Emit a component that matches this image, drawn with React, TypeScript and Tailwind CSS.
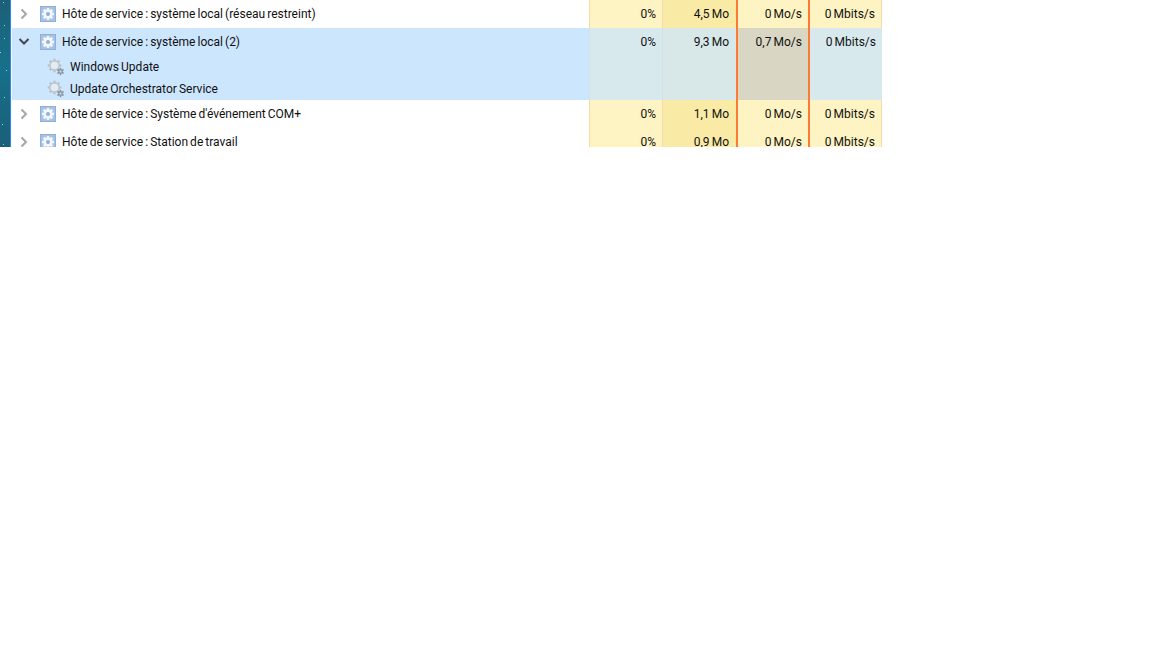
type Cell = { text?: string; bg: string; border: string };

const widths = ["w-[73px] pr-[6px]", "w-[75px] pr-[7px]", "w-[72px] pr-[6px]", "w-[72px] pr-[6px]"];

function GearBox() {
  return (
    <svg width="16" height="16" viewBox="0 0 16 16" className="shrink-0">
      <rect x="0.5" y="0.5" width="15" height="15" fill="#a6c2e6" stroke="#8fb0d8" />
      <g transform="translate(8 8)">
        {[0, 45, 90, 135].map((a) => (
          <rect key={a} x="-1.3" y="-6" width="2.6" height="12" fill="#f4f8fd" transform={`rotate(${a})`} />
        ))}
        <circle r="4.4" fill="#f4f8fd" />
        <circle r="2" fill="#8db0dc" />
      </g>
    </svg>
  );
}

function SmallGears() {
  return (
    <svg width="18" height="18" viewBox="0 0 18 18" className="shrink-0">
      <g transform="translate(7.5 7.5)">
        {[0, 45, 90, 135].map((a) => (
          <rect key={a} x="-1" y="-6.8" width="2" height="13.6" fill="#b4bec6" transform={`rotate(${a})`} />
        ))}
        <circle r="5.4" fill="#bcc6cd" />
        <circle r="3.8" fill="#e4ecf2" />
      </g>
      <g transform="translate(13.5 13.5)">
        {[0, 60, 120].map((a) => (
          <rect key={a} x="-0.7" y="-3.6" width="1.4" height="7.2" fill="#7f8a94" transform={`rotate(${a})`} />
        ))}
        <circle r="2.4" fill="#8f99a2" />
        <circle r="1" fill="#dfe6ea" />
      </g>
    </svg>
  );
}

function Chevron({ open }: { open?: boolean }) {
  return open ? (
    <svg width="12" height="12" viewBox="0 0 12 12" className="shrink-0">
      <path d="M1.5 3 L6 7.5 L10.5 3" fill="none" stroke="#43484d" strokeWidth="2" />
    </svg>
  ) : (
    <svg width="12" height="12" viewBox="0 0 12 12" className="shrink-0">
      <path d="M3.5 1.5 L8 6 L3.5 10.5" fill="none" stroke="#a6a6a6" strokeWidth="2" />
    </svg>
  );
}

function Metrics({ cells, height }: { cells: Cell[]; height: string }) {
  return (
    <>
      {cells.map((c, i) => (
        <div key={i} className={`${height} ${widths[i]} ${c.bg} ${c.border} pt-[6px] text-right`}>
          {c.text}
        </div>
      ))}
    </>
  );
}

function yellowCells(cpu: string, mem: string, disk: string, net: string): Cell[] {
  return [
    { text: cpu, bg: "bg-[#fef3c2]", border: "border-r border-[#f2dcae]" },
    { text: mem, bg: "bg-[#f9eba6]", border: "border-r-2 border-[#fb7a35]" },
    { text: disk, bg: "bg-[#fef3c2]", border: "border-r-2 border-[#fb7a35]" },
    { text: net, bg: "bg-[#fef3c2]", border: "border-r border-[#f2dcae]" },
  ];
}

function ProcessRow({ name, cells }: { name: string; cells: Cell[] }) {
  return (
    <div className="flex h-[28px]">
      <div className="flex w-[577px] items-center pl-[6px]">
        <Chevron />
        <div className="ml-[10px]"><GearBox /></div>
        <span className="ml-[6px]">{name}</span>
      </div>
      <div className="w-px bg-[#f2dcae]" />
      <Metrics cells={cells} height="h-[28px]" />
    </div>
  );
}

function Wallpaper() {
  // bit of desktop wallpaper showing left of the window
  const specks = [[3, 2], [4, 38], [0, 52], [4, 25], [6, 70], [4, 97], [2, 124], [3, 144]];
  return (
    <svg width="10" height="147" className="h-full w-[10px] shrink-0 bg-[linear-gradient(180deg,#1d5f78_0%,#17708a_45%,#1a5f7a_100%)]">
      {specks.map(([x, y]) => (
        <rect key={`${x}-${y}`} x={x} y={y} width="1" height="1" fill="#9fd0de" />
      ))}
    </svg>
  );
}

export default function App() {
  const openCells: Cell[] = [
    { text: "0%", bg: "bg-[#d8e9ee]", border: "border-r border-[#d0e2e6]" },
    { text: "9,3 Mo", bg: "bg-[#d8e8e9]", border: "border-r-2 border-[#fb7a35]" },
    { text: "0,7 Mo/s", bg: "bg-[#d9d6c4]", border: "border-r-2 border-[#fb7a35]" },
    { text: "0 Mbits/s", bg: "bg-[#d8e9ee]", border: "" },
  ];

  return (
    <div className="min-h-[648px] bg-white font-['Roboto',sans-serif] text-[12px] leading-[16px] text-[#111] [word-spacing:-0.9px]">
      <div className="flex h-[147px] overflow-hidden">
        <Wallpaper />
        <div className="w-px shrink-0 bg-[#2a8ae4]" />
        <div className="w-px shrink-0" />
        <div className="w-[870px] shrink-0">
          <ProcessRow name="Hôte de service : système local (réseau restreint)" cells={yellowCells("0%", "4,5 Mo", "0 Mo/s", "0 Mbits/s")} />

          <div className="flex h-[72px] bg-[#cce6fe]">
            <div className="w-[577px]">
              <div className="flex h-[28px] items-center pl-[6px]">
                <Chevron open />
                <div className="ml-[10px]"><GearBox /></div>
                <span className="ml-[6px]">Hôte de service : système local (2)</span>
              </div>
              <div className="flex h-[22px] items-center pl-[35px]">
                <SmallGears />
                <span className="ml-[5px]">Windows Update</span>
              </div>
              <div className="flex h-[22px] items-center pl-[35px]">
                <SmallGears />
                <span className="ml-[5px]">Update Orchestrator Service</span>
              </div>
            </div>
            <div className="w-px bg-[#d0e2e6]" />
            <Metrics cells={openCells} height="h-[72px]" />
          </div>

          <ProcessRow name="Hôte de service : Système d'événement COM+" cells={yellowCells("0%", "1,1 Mo", "0 Mo/s", "0 Mbits/s")} />
          <ProcessRow name="Hôte de service : Station de travail" cells={yellowCells("0%", "0,9 Mo", "0 Mo/s", "0 Mbits/s")} />
        </div>
      </div>
    </div>
  );
}
